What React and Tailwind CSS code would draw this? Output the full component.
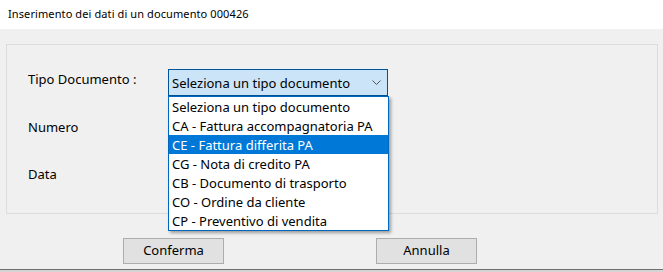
import React from 'react';

const items = [
  'Seleziona un tipo documento',
  'CA - Fattura accompagnatoria PA',
  'CE - Fattura differita PA',
  'CG - Nota di credito PA',
  'CB - Documento di trasporto',
  'CO - Ordine da cliente',
  'CP - Preventivo di vendita',
];

function Chevron() {
  return (
    <svg width="9" height="5" viewBox="0 0 9 5" className="text-[#555]">
      <path d="M0.5 0.5 L4.5 4.5 L8.5 0.5" fill="none" stroke="currentColor" strokeWidth="1" />
    </svg>
  );
}

export default function App() {
  return (
    <div className="w-[663px] h-[272px] flex flex-col bg-[#f0f0f0] text-black overflow-hidden" style={{ fontFamily: '"Segoe UI", "Noto Sans", sans-serif' }}>
      {/* Title bar */}
      <div className="h-[29px] bg-white flex items-center pl-[8px] text-[11px] tracking-[0.1px]">
        Inserimento dei dati di un documento 000426
      </div>

      <div className="flex-1 flex flex-col pt-[15px] pl-[6px]">
        {/* Group panel */}
        <div className="relative w-[652px] h-[170px] border border-[#dcdcdc] pl-[21px] pt-[24px] text-[13px] leading-[16px]">
          <div className="flex h-[27px]">
            <div className="w-[140px] mt-[2px]">Tipo Documento :</div>
            <div className="w-[220px] h-[27px] bg-[#cce4f7] border border-[#005499] flex items-center justify-between pl-[3px] pr-[6px]">
              <span>Seleziona un tipo documento</span>
              <Chevron />
            </div>
          </div>
          <div className="mt-[23px]">Numero</div>
          <div className="mt-[31px]">Data</div>

          {/* Open dropdown list */}
          <div className="absolute left-[161px] top-[51px] w-[221px] bg-white border border-[#0067c0] shadow-[2px_2px_3px_rgba(0,0,0,0.35)] z-10">
            {items.map((t, i) => (
              <div key={t} className={`h-[19px] flex items-center pl-[3px] ${i === 2 ? 'bg-[#0078d7] text-white' : ''}`}>
                {t}
              </div>
            ))}
          </div>
        </div>

        {/* Buttons */}
        <div className="flex mt-[24px] text-[13px]">
          <button className="ml-[117px] w-[101px] h-[26px] bg-[#e1e1e1] border border-[#adadad]">Conferma</button>
          <button className="ml-[152px] w-[101px] h-[26px] bg-[#e1e1e1] border border-[#adadad]">Annulla</button>
        </div>
      </div>

      {/* Bottom edge */}
      <div className="h-[3px] border-t border-[#6e6e6e] bg-[#d4d4d4]" />
    </div>
  );
}
